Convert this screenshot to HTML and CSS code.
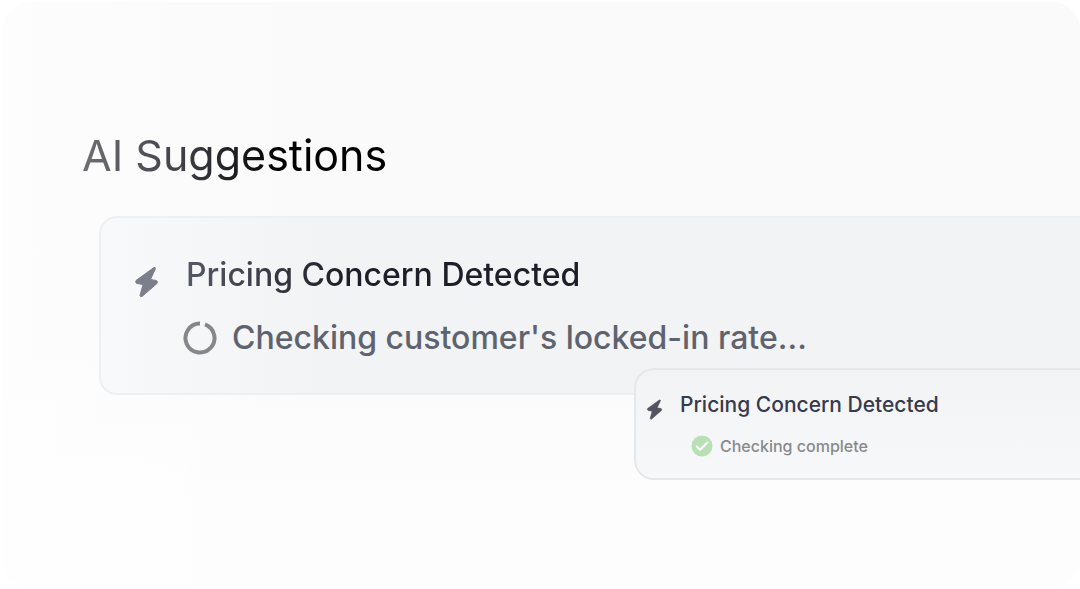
FILE: index.html
```html
<!DOCTYPE html>
<html lang="en">
<head>
<meta charset="utf-8">
<meta name="viewport" content="width=device-width, initial-scale=1">
<title>AI Suggestions</title>
<link rel="stylesheet" href="styles.css">
</head>
<body>
<main class="panel">
  <h1 class="title">AI Suggestions</h1>
  <section class="card card-pending">
    <svg class="bolt" viewBox="0 0 24 32" aria-hidden="true"><path d="M19.500 1.500 1.500 14.500Q.5 17 2.500 17.500L8.500 18.500 5.500 29.500Q6 31.500 7.500 30.500L22.500 17.500Q23.500 15 22 14.500L16 13.500 21 2.500Q21 1 19.500 1.500Z"/></svg>
    <div class="card-body">
      <h2 class="card-title">Pricing Concern Detected</h2>
      <p class="status">
        <svg class="spinner" viewBox="0 0 34 34" aria-hidden="true"><path d="M22 3.400A14.500 14.500 0 1 1 17 2.500"/></svg>
        <span>Checking customer's locked-in rate...</span>
      </p>
    </div>
  </section>
  <section class="card card-complete">
    <svg class="bolt" viewBox="0 0 24 32" aria-hidden="true"><path d="M19.500 1.500 1.500 14.500Q.5 17 2.500 17.500L8.500 18.500 5.500 29.500Q6 31.500 7.500 30.500L22.500 17.500Q23.500 15 22 14.500L16 13.500 21 2.500Q21 1 19.500 1.500Z"/></svg>
    <div class="card-body">
      <h2 class="card-title">Pricing Concern Detected</h2>
      <p class="status">
        <svg class="check" viewBox="0 0 22 22" aria-hidden="true"><circle cx="11" cy="11" r="10.500"/><path d="M5.800 11.500 9.200 14.800 16.300 7.500"/></svg>
        <span>Checking complete</span>
      </p>
    </div>
  </section>
</main>
</body>
</html>
```
FILE: styles.css
```css
* {
  box-sizing: border-box;
}

body {
  margin: 0;
  padding: 2px 0 2px 3px;
  background: #fff;
  font-family: Inter, "Liberation Sans", sans-serif;
}

h1,
h2,
p {
  margin: 0;
  font-weight: 500;
}

svg {
  display: block;
  flex: none;
}

.panel {
  min-height: calc(100vh - 4px);
  padding: 125px 0 80px 79px;
  overflow: hidden;
  border-radius: 28px;
  background:
    linear-gradient(90deg, rgba(255, 255, 255, 0.6), rgba(255, 255, 255, 0) 320px),
    linear-gradient(180deg, #fafafa 55%, #fdfdfd 85%);
}

.title {
  width: max-content;
  font-size: 43px;
  font-weight: 400;
  line-height: 56px;
  background: linear-gradient(90deg, #6f6e73, #45444c 30%, #000 66%);
  background-clip: text;
  color: transparent;
}

.card {
  display: flex;
  border-style: solid;
}

.card-pending {
  margin: 33px 0 0 17px;
  padding: 37px 0 33px 33px;
  gap: 27px;
  border-width: 2px 0 2px 2px;
  border-color: #edeff2;
  border-radius: 18px 0 0 18px;
  background: linear-gradient(90deg, #f8f9fb, #f2f3f5 220px);
}

.card-pending .bolt {
  width: 25px;
  height: 32px;
  margin-top: 11px;
  fill: #7a7f8b;
  stroke: #7a7f8b;
  stroke-linejoin: round;
}

.card-pending .card-title {
  width: max-content;
  font-size: 32px;
  line-height: 40px;
  background: linear-gradient(90deg, #555965, #1d1f28 40%);
  background-clip: text;
  color: transparent;
}

.card-pending .status {
  display: flex;
  align-items: center;
  gap: 15px;
  margin-top: 21px;
  margin-left: -3px;
  font-size: 32px;
  line-height: 44px;
  color: #5f636d;
}

.spinner {
  width: 34px;
  height: 34px;
  fill: none;
  stroke: #85878c;
  stroke-width: 4;
}

.card-complete {
  position: relative;
  margin: -27px 0 0 552px;
  padding: 21px 0 20px 10px;
  gap: 17px;
  border-width: 2px 0 2px 2px;
  border-color: #e6e7e9;
  border-radius: 20px 0 0 20px;
  background: linear-gradient(180deg, #f2f3f5, #f7f8fa);
}

.card-complete .bolt {
  width: 17px;
  height: 21px;
  margin-top: 8px;
  fill: #53545f;
  stroke: #53545f;
  stroke-linejoin: round;
}

.card-complete .card-title {
  font-size: 21px;
  line-height: 28px;
  color: #363a4b;
}

.card-complete .status {
  display: flex;
  align-items: center;
  gap: 7px;
  margin-top: 15px;
  margin-left: 11px;
  font-size: 16px;
  line-height: 24px;
  color: #88898c;
}

.check {
  width: 22px;
  height: 22px;
}

.check circle {
  fill: #b9dfb4;
}

.check path {
  fill: none;
  stroke: #fff;
  stroke-width: 2;
  stroke-linecap: round;
  stroke-linejoin: round;
}
```
